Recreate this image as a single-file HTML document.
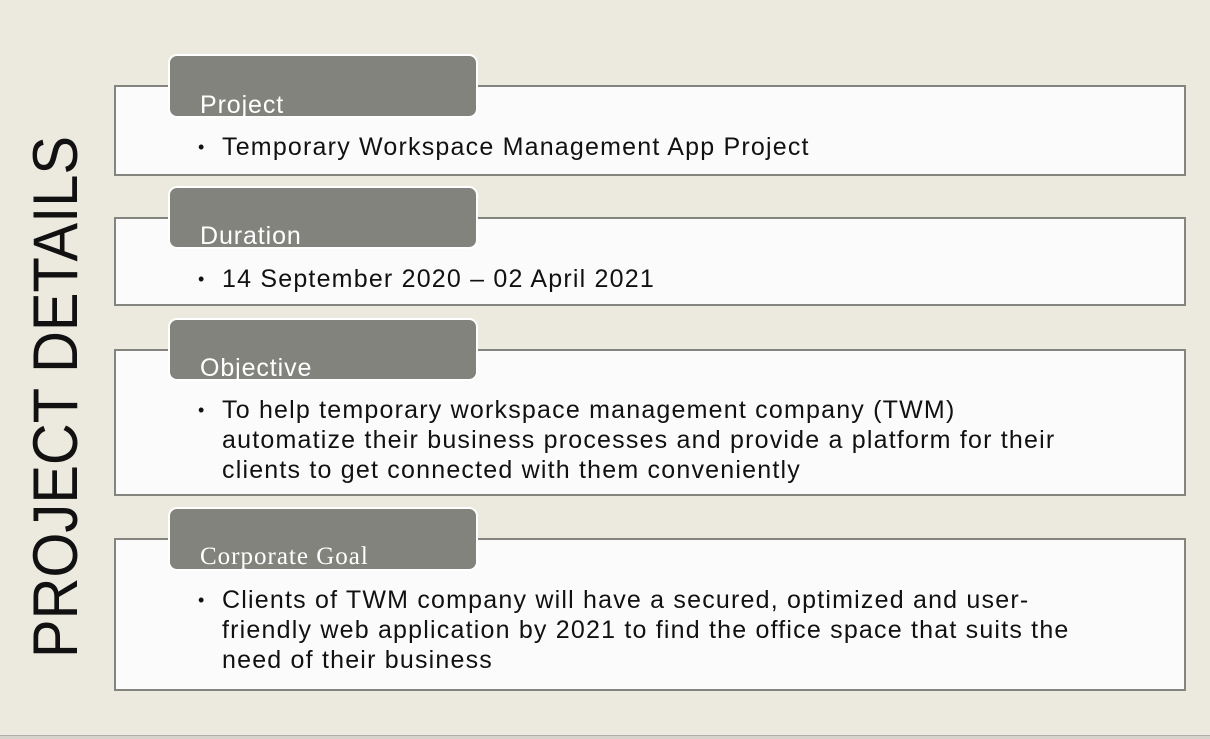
<!DOCTYPE html>
<html><head><meta charset="utf-8"><style>
html,body{margin:0;padding:0}
body{width:1210px;height:738px;background:#ECE9DF;position:relative;overflow:hidden;font-family:"Liberation Sans",sans-serif}
.box{position:absolute;left:114px;width:1068px;background:#FCFBFC;border:2px solid #858580}
.tab{position:absolute;left:168px;width:306px;background:#83837D;border:2px solid #fff;border-radius:9px;color:#fff;font-size:25px;letter-spacing:0.9px}
.tab span{position:absolute;left:30px;bottom:-4px}
.txt{position:absolute;left:222px;font-size:25px;letter-spacing:1.2px;line-height:30px;color:#111}
.txt:before{content:"•";position:absolute;left:-24px;font-size:18px}
.bottom{position:absolute;left:0;top:735px;width:1210px;height:3px;background:#d5d3cc;border-top:1px solid #b0aea8}
</style></head><body>
<svg style="position:absolute;left:0;top:0" width="120" height="738">
<text transform="translate(77,658) rotate(-90)" font-family="Liberation Sans" font-size="63" fill="#111" textLength="522" lengthAdjust="spacingAndGlyphs">PROJECT DETAILS</text>
</svg>
<div class="box" style="top:85px;height:87px"></div>
<div class="tab" style="top:54px;height:60px"><span>Project</span></div>
<div class="txt" style="top:132px">Temporary Workspace Management App Project</div>

<div class="box" style="top:217px;height:85px"></div>
<div class="tab" style="top:186px;height:59px"><span>Duration</span></div>
<div class="txt" style="top:264px">14 September 2020 – 02 April 2021</div>

<div class="box" style="top:349px;height:143px"></div>
<div class="tab" style="top:318px;height:59px"><span>Objective</span></div>
<div class="txt" style="top:395px">To help temporary workspace management company (TWM)<br>automatize their business processes and provide a platform for their<br>clients to get connected with them conveniently</div>

<div class="box" style="top:538px;height:149px"></div>
<div class="tab" style="top:507px;height:60px"><span style="font-family:'Liberation Serif',serif;bottom:-2px;letter-spacing:1px">Corporate Goal</span></div>
<div class="txt" style="top:585px">Clients of TWM company will have a secured, optimized and user-<br>friendly web application by 2021 to find the office space that suits the<br>need of their business</div>
<div class="bottom"></div>
</body></html>
